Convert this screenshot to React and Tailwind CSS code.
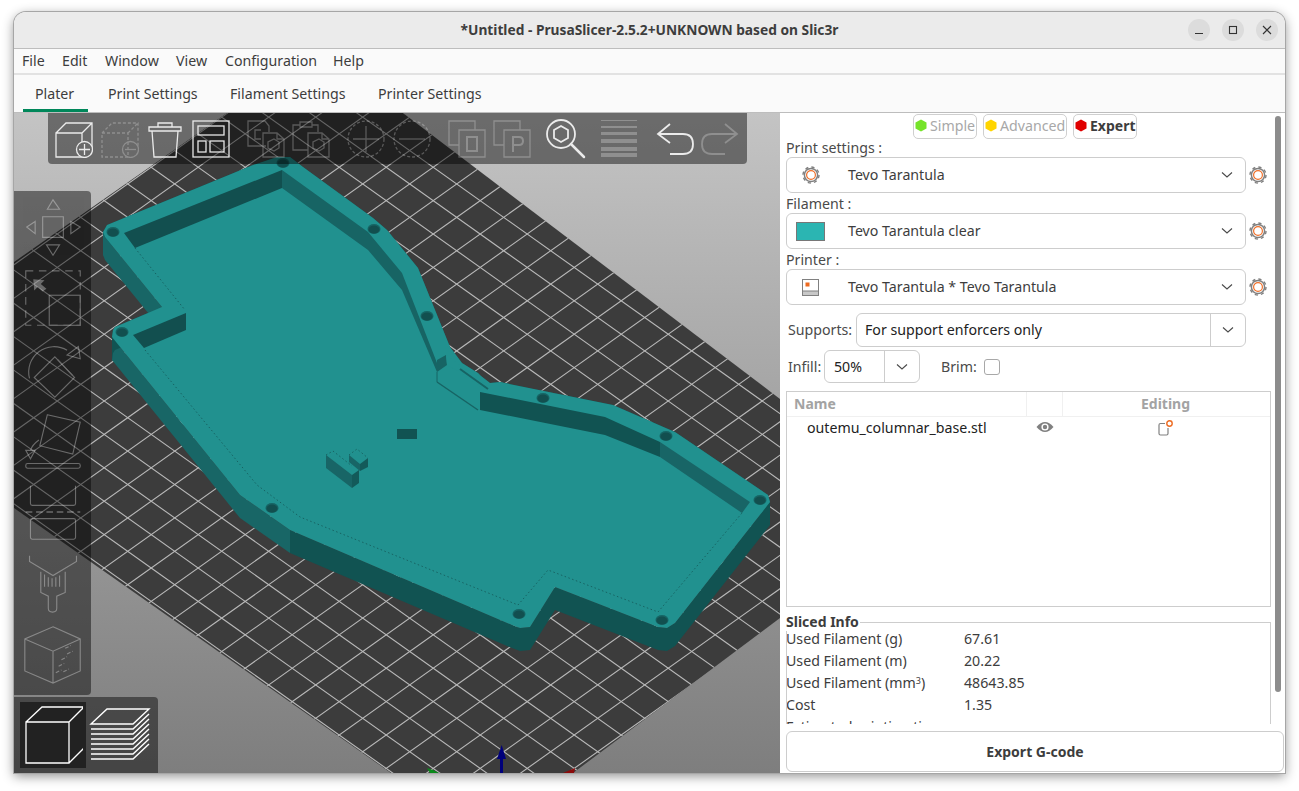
const GRID_X = 456.7;
const GRID_Y = 718.3;

// outline of the printed part, in window pixels
const partOutline = [
  [103, 232], [107, 225], [253, 165], [277, 157], [290, 157], [303, 167], [373, 218], [387, 230],
  [418, 268], [450, 347], [462, 363], [478, 373], [481, 376], [490, 383], [500, 382], [613, 405],
  [675, 432], [768, 495], [770, 502], [675, 623], [667, 628], [658, 627], [555, 587], [530, 627],
  [520, 628], [512, 625], [290, 530], [240, 495], [112, 337], [113, 330], [115, 327], [162, 307],
  [105, 237],
];

const holes = [
  [113, 232], [283, 163], [374, 229], [427, 316], [122, 332], [272, 508],
  [519, 614], [662, 620], [760, 500], [666, 436], [543, 398],
];

const pts = (list) => list.map((p) => p.join(",")).join(" ");

function sideColor(a, b) {
  const dx = b[0] - a[0];
  const dy = b[1] - a[1];
  if (dx * dy > 0 && Math.abs(dy / dx) >= 0.6) return "#186666";
  return "#115352";
}

function Scene() {
  const lines = [];
  for (let k = -40; k <= 40; k++) {
    const x = GRID_X + k * 47;
    lines.push([x - 1000, GRID_Y - 710.6, x + 1000, GRID_Y + 710.6]);
    lines.push([x - 1000, GRID_Y + 710.6, x + 1000, GRID_Y - 710.6]);
  }
  const bed = "227,113 403,113 780,399 780,618 573,773 391,773 14,508 14,262";
  return (
    <svg className="block w-full h-full" viewBox="14 113 766 660">
      <defs>
        <clipPath id="bed">
          <polygon points={bed} />
        </clipPath>
      </defs>
      <polygon points={bed} fill="#3c3c3c" />
      <g clipPath="url(#bed)" stroke="#b9b9b9" strokeWidth="1.1">
        {lines.map((l, i) => (
          <line key={i} x1={l[0]} y1={l[1]} x2={l[2]} y2={l[3]} />
        ))}
      </g>

      {/* axes */}
      <polygon points="427,768 433,770 439,773 430,773" fill="#0a8a1a" />
      <polygon points="563,773 575,768 574,773" fill="#8a0a0a" />
      <polygon points="501.7,745 506,759 503,759 503,773 500,773 500,759 497,759" fill="#00007a" />

      {/* part walls */}
      {partOutline.map((a, i) => {
        const b = partOutline[(i + 1) % partOutline.length];
        return (
          <polygon
            key={i}
            points={pts([a, b, [b[0], b[1] + 23], [a[0], a[1] + 23]])}
            fill={sideColor(a, b)}
          />
        );
      })}
      <polygon points={pts(partOutline)} fill="#21918f" />

      {/* inner walls */}
      <polygon points="124,233 282,170 282,188 135,248" fill="#124f4f" />
      <polygon points="282,170 368,232 402,273 437,363 437,372 402,290 368,250 282,188" fill="#176464" />
      <polygon points="133,335 186,313 186,330 144,348" fill="#124f4f" />
      <polygon points="437,360 446,355 447,365 437,372" fill="#176464" />
      <polygon points="446,355 462,367 487,385 484,389 460,372 447,365" fill="#21918f" />
      <polyline points="460,369 488,389" fill="none" stroke="#176464" strokeWidth="2" />
      <polyline points="437,382 478,410" fill="none" stroke="#176464" strokeWidth="1.5" />
      <polyline points="437,372 437,382" fill="none" stroke="#176464" strokeWidth="1" />
      <polygon points="480,392 605,417 660,442 660,457 605,435 480,410" fill="#115352" />
      <polygon points="660,442 750,502 742,513 660,457" fill="#186566" />

      {/* seam */}
      <polyline
        points="135,248 185,310"
        fill="none"
        stroke="#124f4f"
        strokeWidth="0.7"
        strokeDasharray="1.5 2.5"
      />
      <polyline
        points="145,350 257,485 300,517 518,605 548,570 658,612 742,513"
        fill="none"
        stroke="#124f4f"
        strokeWidth="0.7"
        strokeDasharray="1.5 2.5"
      />

      {/* small pieces on the floor */}
      <rect x="397" y="429" width="20" height="10" fill="#115352" />
      <polygon points="326,455 352,475 352,488 326,468" fill="#186566" />
      <polygon points="352,475 359,470 359,483 352,488" fill="#135a5a" />
      <polygon points="349,455 360,464 360,471 349,462" fill="#186566" />
      <polygon points="360,464 368,458 368,467 360,471" fill="#135a5a" />
      <polyline points="326,455 333,451 352,466" fill="none" stroke="#124f4f" strokeWidth="0.7" strokeDasharray="1.5 2.5" />
      <polyline points="349,455 357,449 368,458" fill="none" stroke="#124f4f" strokeWidth="0.7" strokeDasharray="1.5 2.5" />

      {holes.map((h, i) => (
        <g key={i}>
          <ellipse cx={h[0]} cy={h[1]} rx="6.5" ry="5" fill="#176464" />
          <ellipse cx={h[0]} cy={h[1] + 0.5} rx="5.5" ry="4" fill="#124f4f" />
        </g>
      ))}
    </svg>
  );
}

function Icon({ off, size = 38, children, vb = "0 0 38 38" }) {
  return (
    <svg
      width={size}
      height={size}
      viewBox={vb}
      fill="none"
      stroke="#f2f2f2"
      strokeWidth="1.3"
      opacity={off ? 0.27 : 0.95}
      className="shrink-0"
    >
      {children}
    </svg>
  );
}

function TopToolbar() {
  return (
    <div className="absolute left-[34px] top-0 w-[699px] h-[51px] bg-black/45 rounded-b-[4px] flex items-center pl-[7px]">
      <div className="flex gap-[7.5px]">
        <Icon>
          <path d="M1 13 L11 3 H37 V28 M1 13 H27 V37 H1 Z M27 13 L37 3" />
          <circle cx="29.5" cy="29.5" r="8" fill="#6a6a6a" />
          <path d="M29.5 24 V35 M24 29.5 H35" />
        </Icon>
        <Icon off>
          <path d="M1 13 L11 3 H37 V28 M1 13 H27 V37 H1 Z M27 13 L37 3" strokeDasharray="3 2" />
          <circle cx="29.5" cy="29.5" r="8" />
          <path d="M24 29.5 H35" />
        </Icon>
        <Icon>
          <path d="M3 7 H35 V11 H3 Z M12 7 V3 H26 V7 M6 11 L8 37 H30 L32 11" />
        </Icon>
        <Icon>
          <rect x="1" y="1" width="36" height="36" />
          <rect x="6" y="6" width="26" height="9" />
          <rect x="6" y="21" width="8" height="11" />
          <rect x="18" y="21" width="14" height="11" />
        </Icon>
      </div>
      <div className="flex gap-[7.5px] ml-[17px]">
        <Icon off>
          <path d="M19 26 H1 V1 H18 L22 6 V12" />
          <path d="M14 10 H8 V19 H14" />
          <path d="M16 13 H30 L37 19 V37 H16 Z M30 13 V19 H37" />
          <path d="M27 19 L32 22 V28 L27 31 L21 28 V22 Z" />
        </Icon>
        <Icon off>
          <path d="M16 30 H1 V5 H8 M20 5 H26 V12 M8 2 H20 V7 H8 Z" />
          <path d="M16 13 H30 L37 19 V37 H16 Z M30 13 V19 H37" />
          <path d="M27 19 L32 22 V28 L27 31 L21 28 V22 Z" />
        </Icon>
      </div>
      <div className="flex gap-[7.5px] ml-[17px]">
        <Icon off>
          <circle cx="19" cy="19" r="18" strokeDasharray="3 2" />
          <path d="M19 6 V32 M6 19 H32" />
        </Icon>
        <Icon off>
          <circle cx="19" cy="19" r="18" strokeDasharray="3 2" />
          <path d="M6 19 H32" />
        </Icon>
      </div>
      <div className="flex gap-[7.5px] ml-[17px]">
        <Icon off>
          <path d="M11 25 H1 V1 H27 V10 M11 10 H37 V37 H11 Z" />
          <path d="M19 17 H29 V31 H19 Z" strokeWidth="2" />
        </Icon>
        <Icon off>
          <path d="M11 25 H1 V1 H27 V10 M11 10 H37 V37 H11 Z" />
          <path d="M20 32 V17 H26 Q30 17 30 21 Q30 25 26 25 H20" strokeWidth="2" />
        </Icon>
      </div>
      <div className="flex gap-[15px] ml-[15px]">
        <Icon size={40} vb="0 0 40 40">
          <circle cx="15" cy="15" r="14" strokeWidth="1.8" />
          <path d="M15 7 L22 11 V19 L15 23 L8 19 V11 Z" strokeWidth="1.8" />
          <path d="M25 25 L38 38" strokeWidth="2.5" strokeLinecap="round" />
        </Icon>
        <svg width="36" height="38" viewBox="0 0 36 38" fill="#ffffff" opacity="0.25" className="shrink-0">
          <rect x="0" y="1" width="36" height="1" />
          <rect x="0" y="7" width="36" height="2" />
          <rect x="0" y="13" width="36" height="3" />
          <rect x="0" y="20" width="36" height="4" />
          <rect x="0" y="28" width="36" height="4" />
          <rect x="0" y="34" width="36" height="4" />
        </svg>
      </div>
      <div className="flex gap-[7px] ml-[19px]">
        <Icon>
          <path d="M14 4 L2 14 L14 23 M2 14 H27 Q37 14 37 24 Q37 34 27 34 H14" strokeWidth="1.8" />
        </Icon>
        <Icon off>
          <path d="M24 4 L36 14 L24 23 M36 14 H11 Q1 14 1 24 Q1 34 11 34 H24" strokeWidth="1.8" />
        </Icon>
      </div>
    </div>
  );
}

function SideIcon({ children }) {
  return (
    <svg
      width="62"
      height="62"
      viewBox="0 0 62 66"
      fill="none"
      stroke="#ffffff"
      strokeWidth="1.2"
      opacity="0.33"
      className="block overflow-visible"
    >
      {children}
    </svg>
  );
}

function SideToolbar() {
  return (
    <div className="absolute left-0 top-[78px] w-[77px] h-[504px] bg-black/45 rounded-r-[4px] flex flex-col gap-[9px] pt-[6px] pl-[8px]">
      <SideIcon>
        <path d="M31 3 L25 13 H38 Z M20 21 H42 V43 H20 Z M12 26 L3 32 L12 39 Z M50 26 L60 32 L50 39 Z M24 51 H38 L31 62 Z" />
      </SideIcon>
      <SideIcon>
        <rect x="2" y="3" width="58" height="58" strokeDasharray="8 6" />
        <rect x="27" y="29" width="33" height="32" />
        <polygon points="10,12 22,13 18,17 24,22 20,25 15,20 11,24" fill="#fff" stroke="none" />
      </SideIcon>
      <SideIcon>
        <path d="M6 42 A27 27 0 0 1 46 12" />
        <path d="M58 8 L60 21 L46 17 Z" />
        <path d="M33 19 L54 41 L33 62 L11 41 Z" />
        <path d="M36 22 L52 39" />
      </SideIcon>
      <SideIcon>
        <path d="M25 5 L60 13 L52 47 L17 38 Z" />
        <rect x="2" y="57" width="58" height="5" rx="2" />
        <path d="M16 32 Q9 37 7 43" />
        <path d="M2 43 H12 L7 52 Z" />
      </SideIcon>
      <SideIcon>
        <path d="M7 5 V24 Q7 26 9 26 H53 Q55 26 55 24 V5" />
        <path d="M2 33 H60" strokeDasharray="7 4" strokeWidth="1.6" />
        <rect x="7" y="40" width="48" height="22" rx="2" />
      </SideIcon>
      <SideIcon>
        <path d="M6 4 V10 L31 25 L56 10 V4" />
        <path d="M18 21 V43 L26 47 V60 Q26 64 30.5 64 Q35 64 35 60 V47 L44 43 V21" />
        <path d="M22 24 V37 M26 27 V37 M30 28 V37 M34 27 V37 M38 25 V37" />
      </SideIcon>
      <SideIcon>
        <path d="M31 4 L60 17 V51 L31 64 L1 51 V17 Z M1 17 L31 30 L60 17 M31 30 V64" />
        <path d="M44 27 L50 24 M46 33 L52 30 M40 39 L46 36 M37 46 L43 43 M34 53 L40 50 M42 52 L48 49" strokeDasharray="4 2" />
      </SideIcon>
    </div>
  );
}

function ViewToolbar() {
  return (
    <div className="absolute left-0 bottom-0 w-[144px] h-[76px] bg-black/45 rounded-tr-[4px] flex items-center gap-[2px] pl-[6px]">
      <div className="w-[66px] h-[66px] bg-[#222222] flex items-center justify-center">
        <svg width="60" height="60" viewBox="0 0 60 60" fill="none" stroke="#fff" strokeWidth="1.3">
          <path d="M4 20 H47 V61 H4 Z M4 20 L20 5 H62 V46 L47 61 M47 20 L62 5" transform="translate(-1 -3)" />
        </svg>
      </div>
      <div className="w-[64px] h-[66px] flex items-center justify-center">
        <svg width="62" height="62" viewBox="0 0 62 62" fill="none" stroke="#fff" strokeWidth="1.4">
          <path d="M2 20 L18 5 H60 L44 20 Z" />
          <path d="M2 25 H44 L60 10 M2 30 H44 L60 15 M2 35 H44 L60 20 M2 40 H44 L60 25 M2 45 H44 L60 30 M2 50 H44 L60 35 M2 55 H44 L60 40" />
        </svg>
      </div>
    </div>
  );
}

function Chevron() {
  return (
    <svg width="12" height="8" viewBox="0 0 12 8" fill="none" stroke="#4a4a4a" strokeWidth="1.1">
      <path d="M1 1.5 L6 6 L11 1.5" />
    </svg>
  );
}

function Gear() {
  return (
    <svg width="18" height="18" viewBox="0 0 18 18" className="shrink-0">
      <circle cx="9" cy="9" r="8" fill="none" stroke="#808080" strokeWidth="1.4" strokeDasharray="3.2 3.1" />
      <circle cx="9" cy="9" r="6.6" fill="#fff" stroke="#808080" strokeWidth="1.5" />
      <circle cx="9" cy="9" r="4.4" fill="#fff" stroke="#f0702a" strokeWidth="1.2" />
    </svg>
  );
}

function Hexagon({ color }) {
  return (
    <svg width="12" height="13" viewBox="0 0 12 13" className="shrink-0">
      <polygon points="6,0.5 11.5,3.5 11.5,9.5 6,12.5 0.5,9.5 0.5,3.5" fill={color} />
    </svg>
  );
}

function ModeButton({ color, label, width, active }) {
  return (
    <div
      className={`h-[25px] border border-[#cfcfcf] rounded-[5px] flex items-center gap-[3px] pl-[1px] pb-[2px] overflow-hidden whitespace-nowrap ${
        active ? "font-bold text-[#3d3d3d] text-[14px]" : "text-[#a8a8a8]"
      } ${width}`}
    >
      <Hexagon color={color} />
      {label}
    </div>
  );
}

function PresetCombo({ icon, label }) {
  return (
    <div className="flex items-center">
      <div className="w-[460px] h-[36px] border border-[#cdcdcd] rounded-[6px] flex items-center">
        <div className="w-[47px] mr-[14px] flex justify-center shrink-0">{icon}</div>
        <span className="text-[#3d3d3d]">{label}</span>
        <div className="ml-auto mr-[12px]">
          <Chevron />
        </div>
      </div>
      <div className="ml-[3px]">
        <Gear />
      </div>
    </div>
  );
}

function SlicedRow({ label, value }) {
  return (
    <div className="h-[22px] flex items-center text-[#3d3d3d] shrink-0">
      <span className="w-[178px]">{label}</span>
      <span>{value}</span>
    </div>
  );
}

function SidePanel() {
  return (
    <div className="relative w-[505px] shrink-0 flex flex-col bg-white">
      <div className="flex-1 min-h-0 overflow-hidden pl-[6px]">
        <div className="flex justify-center gap-[6px] w-[478px] pt-[1px]">
          <ModeButton color="#76e32a" label="Simple" width="w-[64px]" />
          <ModeButton color="#ffd500" label="Advanced" width="w-[84px]" />
          <ModeButton color="#e00000" label="Expert" width="w-[64px]" active />
        </div>

        <div className="h-[18px] flex items-center text-[#4a4a4a]">Print settings :</div>
        <PresetCombo icon={<Gear />} label="Tevo Tarantula" />
        <div className="h-[20px] pt-[2px] flex items-center text-[#4a4a4a]">Filament :</div>
        <PresetCombo
          icon={<div className="w-[29px] h-[19px] bg-[#2bb5b2] border border-[#777777]" />}
          label="Tevo Tarantula clear"
        />
        <div className="h-[20px] pt-[2px] flex items-center text-[#4a4a4a]">Printer :</div>
        <PresetCombo
          icon={
            <svg width="17" height="17" viewBox="0 0 17 17">
              <rect x="0.5" y="0.5" width="16" height="16" fill="#fff" stroke="#808080" />
              <rect x="0.5" y="12" width="16" height="4.5" fill="#c8c8c8" stroke="#808080" />
              <rect x="3.5" y="3.5" width="4" height="4" fill="#ed6b21" />
            </svg>
          }
          label="Tevo Tarantula * Tevo Tarantula"
        />

        <div className="flex items-center mt-[8px] pl-[2px] text-[#4a4a4a]">
          <span className="w-[68px]">Supports:</span>
          <div className="w-[390px] h-[34px] border border-[#cdcdcd] rounded-[6px] flex items-center text-[#222222]">
            <span className="pl-[8px]">For support enforcers only</span>
            <div className="ml-auto w-[35px] h-full border-l border-[#cdcdcd] flex items-center justify-center">
              <Chevron />
            </div>
          </div>
        </div>

        <div className="flex items-center mt-[3px] pl-[2px] text-[#4a4a4a]">
          <span className="w-[36px]">Infill:</span>
          <div className="w-[96px] h-[33px] border border-[#cdcdcd] rounded-[6px] flex items-center text-[#222222]">
            <span className="w-[59px] pl-[9px]">50%</span>
            <div className="flex-1 h-full border-l border-[#cdcdcd] flex items-center justify-center">
              <Chevron />
            </div>
          </div>
          <span className="ml-[21px] w-[43px]">Brim:</span>
          <div className="w-[16px] h-[16px] border border-[#a8a8a8] rounded-[3px]" />
        </div>

        <div className="mt-[8px] w-[485px] h-[216px] border border-[#cdcdcd]">
          <div className="h-[25px] flex font-bold text-[14px] text-[#a3a3a3] border-b border-[#f0f0f0]">
            <div className="w-[240px] pl-[7px] flex items-center border-r border-[#f0f0f0]">Name</div>
            <div className="w-[36px] border-r border-[#f0f0f0]" />
            <div className="flex-1 pr-[2px] flex items-center justify-center">Editing</div>
          </div>
          <div className="h-[21px] flex items-center text-[#222222]">
            <span className="w-[240px] pl-[20px]">outemu_columnar_base.stl</span>
            <div className="w-[36px] flex justify-center pb-[2px]">
              <svg width="18" height="12" viewBox="0 0 18 12">
                <path d="M0.5 6 Q9 -4 17.5 6 Q9 16 0.5 6 Z" fill="#808080" />
                <circle cx="9" cy="6" r="3.6" fill="#fff" />
                <circle cx="9" cy="6" r="2.2" fill="#808080" />
              </svg>
            </div>
            <div className="flex-1 pr-[2px] flex justify-center">
              <svg width="16" height="16" viewBox="0 0 16 16" fill="none">
                <path d="M7 3.5 H2.5 Q1 3.5 1 5 V13.5 Q1 15 2.5 15 H8.5 Q10 15 10 13.5 V8" stroke="#808080" strokeWidth="1.2" />
                <circle cx="11.5" cy="3.5" r="2.7" stroke="#ed6b21" strokeWidth="1.4" />
              </svg>
            </div>
          </div>
        </div>

        <div className="relative mt-[6px] w-[485px] pt-[15px] h-[130px] overflow-hidden flex flex-col">
          <div className="absolute left-0 right-0 top-[9px] h-px bg-[#cdcdcd]" />
          <div className="absolute right-0 top-[9px] bottom-0 w-px bg-[#cdcdcd]" />
          <div className="absolute left-0 top-[9px] bottom-0 w-px bg-[#cdcdcd]" />
          <div className="absolute left-0 top-0 h-[18px] flex items-center font-bold text-[14px] text-[#3d3d3d] bg-white pr-[1px] leading-none">
            Sliced Info
          </div>
          <div className="flex flex-col">
            <SlicedRow label="Used Filament (g)" value="67.61" />
            <SlicedRow label="Used Filament (m)" value="20.22" />
            <SlicedRow
              label={
                <>
                  Used Filament (mm<sup className="text-[9px]">3</sup>)
                </>
              }
              value="48643.85"
            />
            <SlicedRow label="Cost" value="1.35" />
            <SlicedRow label="Estimated printing time:" value="" />
          </div>
        </div>
      </div>

      <div className="pl-[6px] pr-[1px] pb-[1px] pt-[7px] shrink-0">
        <div className="h-[41px] border border-[#cdcdcd] rounded-[6px] flex items-center justify-center font-bold text-[14px] text-[#3d3d3d]">
          Export G-code
        </div>
      </div>

      <div className="absolute right-[4px] top-[3px] w-[6px] h-[576px] rounded-full bg-[#8c8c8c]" />
    </div>
  );
}

export default function App() {
  return (
    <div
      className="h-screen bg-white overflow-hidden pt-[12px] pl-[14px] text-[14.2px] leading-[20px]"
      style={{ fontFamily: '"Noto Sans", sans-serif' }}
    >
      <div className="w-[1271px] h-[761px] rounded-t-[12px] overflow-hidden flex flex-col bg-[#fafafa] shadow-[0_0_0_1px_#a6a6a6,0_3px_12px_rgba(0,0,0,0.45)]">
        {/* Title bar */}
        <div className="relative h-[37px] shrink-0 bg-[#ebebeb] border-b border-[#bdbdbd] flex items-center justify-center font-bold text-[13.75px] text-[#3d3d3d]">
          <span>*Untitled - PrusaSlicer-2.5.2+UNKNOWN based on Slic3r</span>
          <div className="absolute right-[7px] top-[7px] flex gap-[12px]">
            <div className="w-[22px] h-[22px] rounded-full bg-[#dcdcdc] flex items-center justify-center">
              <svg width="10" height="10" viewBox="0 0 10 10" stroke="#333" strokeWidth="1.1">
                <path d="M1 8.5 H9" />
              </svg>
            </div>
            <div className="w-[22px] h-[22px] rounded-full bg-[#dcdcdc] flex items-center justify-center">
              <svg width="10" height="10" viewBox="0 0 10 10" fill="none" stroke="#333" strokeWidth="1.1">
                <rect x="1.5" y="1.5" width="7" height="7" />
              </svg>
            </div>
            <div className="w-[22px] h-[22px] rounded-full bg-[#dcdcdc] flex items-center justify-center">
              <svg width="10" height="10" viewBox="0 0 10 10" stroke="#333" strokeWidth="1.1">
                <path d="M1 1 L9 9 M9 1 L1 9" />
              </svg>
            </div>
          </div>
        </div>

        {/* Menu */}
        <div className="h-[26px] shrink-0 flex items-center pl-[8px] text-[#3d3d3d] border-b-2 border-[#e2e2e2]">
          <span className="w-[40px]">File</span>
          <span className="w-[43px]">Edit</span>
          <span className="w-[71px]">Window</span>
          <span className="w-[49px]">View</span>
          <span className="w-[108px]">Configuration</span>
          <span>Help</span>
        </div>

        {/* Tabs */}
        <div className="h-[38px] shrink-0 flex text-[#3d3d3d] border-b border-[#bdbdbd]">
          <div className="ml-[9px] w-[65px] h-full pl-[12px] flex items-center border-b-[3px] border-[#00875a] pt-[3px]">
            Plater
          </div>
          <div className="ml-[20px] w-[122px] flex items-center">Print Settings</div>
          <div className="w-[148px] flex items-center">Filament Settings</div>
          <div className="flex items-center">Printer Settings</div>
        </div>

        {/* Body */}
        <div className="flex-1 min-h-0 flex">
          <div className="relative flex-1 min-w-0 bg-gradient-to-b from-[#c4c4c4] to-[#7e7e7e]">
            <Scene />
            <TopToolbar />
            <SideToolbar />
            <ViewToolbar />
          </div>
          <SidePanel />
        </div>
      </div>
    </div>
  );
}
